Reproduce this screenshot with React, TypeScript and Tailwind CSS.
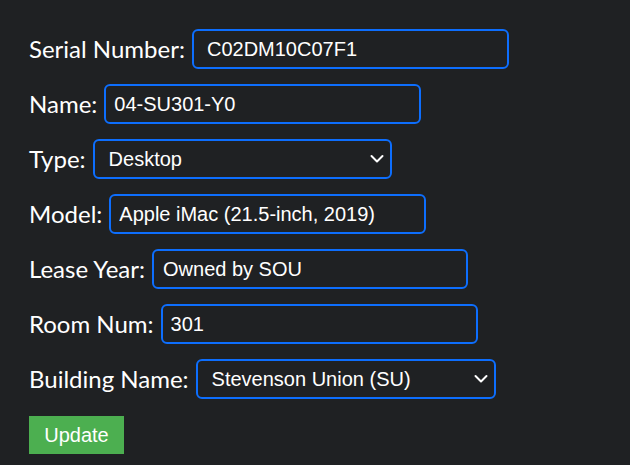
import { ChangeEvent, useState } from "react";

const fieldCls =
  "h-[40px] rounded-[6px] border-2 border-[#0d6efd] bg-transparent text-[20px] text-white outline-none font-['Liberation_Sans',Arial,sans-serif]";

function Chevron() {
  return (
    <svg
      width="14"
      height="9"
      viewBox="0 0 14 9"
      className="pointer-events-none absolute right-[8px] top-1/2 -translate-y-1/2"
    >
      <path d="M1.5 1.5 L7 7 L12.5 1.5" fill="none" stroke="#fff" strokeWidth="2" strokeLinecap="round" strokeLinejoin="round" />
    </svg>
  );
}

function Row({ label, children }: { label: string; children: React.ReactNode }) {
  return (
    <div className="flex items-center">
      <label className="mr-[7px] text-[24px] leading-none text-white">{label}</label>
      {children}
    </div>
  );
}

export default function App() {
  const [form, setForm] = useState({
    serial: "C02DM10C07F1",
    name: "04-SU301-Y0",
    type: "Desktop",
    model: "Apple iMac (21.5-inch, 2019)",
    lease: "Owned by SOU",
    room: "301",
    building: "Stevenson Union (SU)",
  });

  const update = (key: keyof typeof form) => (e: ChangeEvent<HTMLInputElement | HTMLSelectElement>) =>
    setForm({ ...form, [key]: e.target.value });

  return (
    <div className="min-h-[465px] w-full bg-[#1f2123] pl-[29px] pt-[29px] font-['Lato','Open_Sans',sans-serif]">
      <div className="flex flex-col gap-[15px]">
        <Row label="Serial Number:">
          <input className={`${fieldCls} w-[317px] pl-[13px]`} value={form.serial} onChange={update("serial")} />
        </Row>
        <Row label="Name:">
          <input className={`${fieldCls} w-[317px] pl-[8px]`} value={form.name} onChange={update("name")} />
        </Row>
        <Row label="Type:">
          <div className="relative">
            <select className={`${fieldCls} w-[299px] appearance-none pl-[14px]`} value={form.type} onChange={update("type")}>
              <option className="bg-[#1f2123]">Desktop</option>
              <option className="bg-[#1f2123]">Laptop</option>
            </select>
            <Chevron />
          </div>
        </Row>
        <Row label="Model:">
          <input className={`${fieldCls} w-[317px] pl-[8px]`} value={form.model} onChange={update("model")} />
        </Row>
        <Row label="Lease Year:">
          <input className={`${fieldCls} w-[316px] pl-[9px]`} value={form.lease} onChange={update("lease")} />
        </Row>
        <Row label="Room Num:">
          <input className={`${fieldCls} w-[317px] pl-[8px]`} value={form.room} onChange={update("room")} />
        </Row>
        <Row label="Building Name:">
          <div className="relative">
            <select className={`${fieldCls} w-[300px] appearance-none pl-[14px]`} value={form.building} onChange={update("building")}>
              <option className="bg-[#1f2123]">Stevenson Union (SU)</option>
              <option className="bg-[#1f2123]">Hannon Library (LIB)</option>
            </select>
            <Chevron />
          </div>
        </Row>
      </div>
      <button className="mt-[17px] h-[38px] w-[95px] bg-[#4caf50] text-[20px] text-white font-['Liberation_Sans',Arial,sans-serif]">
        Update
      </button>
    </div>
  );
}
